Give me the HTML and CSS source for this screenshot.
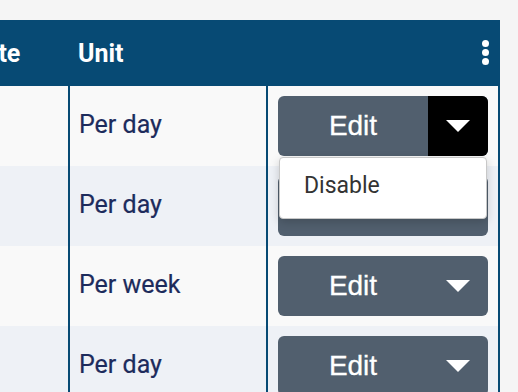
FILE: index.html
```html
<!DOCTYPE html>
<html>
<head>
<meta charset="utf-8" />
<title>Rates</title>
<link rel="stylesheet" href="styles.css">
</head>
<body>
<div class="wrap">
  <div class="grid">
    <div class="row head">
      <div class="cell">Rate</div>
      <div class="cell">Unit</div>
      <div class="cell menu">
        <span class="kebab"><i></i><i></i><i></i></span>
      </div>
    </div>
    <div class="row odd">
      <div class="cell"></div>
      <div class="cell unit">Per day</div>
      <div class="cell act">
        <div class="split open">
          <button class="main">Edit</button>
          <button class="caret"><b></b></button>
          <div class="drop">
            <div class="item">Disable</div>
          </div>
        </div>
      </div>
    </div>
    <div class="row even">
      <div class="cell"></div>
      <div class="cell unit">Per day</div>
      <div class="cell act">
        <div class="split">
          <button class="main">Edit</button>
          <button class="caret"><b></b></button>
        </div>
      </div>
    </div>
    <div class="row odd">
      <div class="cell"></div>
      <div class="cell unit">Per week</div>
      <div class="cell act">
        <div class="split">
          <button class="main">Edit</button>
          <button class="caret"><b></b></button>
        </div>
      </div>
    </div>
    <div class="row even">
      <div class="cell"></div>
      <div class="cell unit">Per day</div>
      <div class="cell act">
        <div class="split">
          <button class="main">Edit</button>
          <button class="caret"><b></b></button>
        </div>
      </div>
    </div>
  </div>
</div>
</body>
</html>
```

FILE: styles.css
```css
html, body { margin:0; padding:0; background:#f5f5f5; font-family:Roboto, "Liberation Sans", sans-serif; overflow:hidden; }
.wrap { padding-top:20px; }
.grid { margin-left:-40px; width:540px; }
.row { display:grid; grid-template-columns:110px 198px 232px; height:80px; }
.row.odd { background:#f9f9f9; }
.row.even { background:#eef1f6; }
.cell { box-sizing:border-box; border-right:2px solid #074a74; display:flex; align-items:center; padding-left:9px; }
.row.head { height:66px; background:#074a74; color:#fff; font-weight:bold; font-size:25px; }
.row.head .cell { border-right:0; padding-left:8px; }
.row.head .cell:first-child { padding-left:9px; }
.menu { justify-content:flex-end; padding-right:11px; }
.kebab { display:flex; flex-direction:column; gap:2px; margin-top:-2px; }
.kebab i { width:7px; height:7px; border-radius:50%; background:#fff; display:block; }
.unit { font-size:25px; color:#1d2b5c; padding-bottom:4px; -webkit-text-stroke:0.2px #1d2b5c; }
.act { padding:0 10px; }
.split { position:relative; display:flex; width:210px; height:60px; border-radius:6px; background:#515f6e; }
.split button { border:0; background:none; color:#fff; font-family:"Liberation Sans", Arial, sans-serif; font-size:28px; padding:0; cursor:pointer; -webkit-text-stroke:0.3px #fff; }
.split .main { width:150px; }
.split .caret { width:60px; display:flex; align-items:center; justify-content:center; border-radius:0 6px 6px 0; }
.split.open .caret { background:#000; }
.caret b { width:0; height:0; border-left:12px solid transparent; border-right:12px solid transparent; border-top:12px solid #fff; }
.drop { position:absolute; left:1px; right:1px; top:61px; height:62px; box-sizing:border-box; background:#fff; border:1px solid #c8c8c8; border-radius:4px; box-shadow:0 3px 10px rgba(0,0,0,0.18); z-index:2; display:flex; align-items:center; }
.drop .item { padding-left:24px; padding-bottom:6px; font-size:23px; color:#333; }
```
